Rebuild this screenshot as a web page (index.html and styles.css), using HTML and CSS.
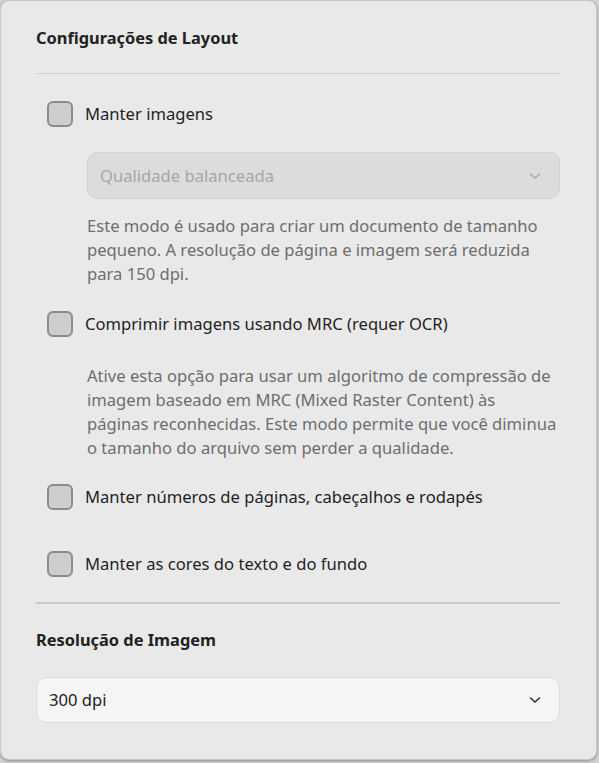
FILE: index.html
```html
<!DOCTYPE html>
<html lang="pt">
<head>
<meta charset="utf-8">
<title>Configurações de Layout</title>
<link rel="stylesheet" href="styles.css">
</head>
<body>
<div class="panel">
  <h2 class="section-title first">Configurações de Layout</h2>
  <div class="divider thin"></div>

  <label class="option opt-1">
    <span class="checkbox"></span>
    <span class="option-label">Manter imagens</span>
  </label>

  <div class="select disabled">
    <span class="select-value">Qualidade balanceada</span>
    <svg class="chevron" width="12" height="8" viewBox="0 0 12 8"><path d="M1.5 2 L6 6 L10.5 2" fill="none" stroke="currentColor" stroke-width="1.2" stroke-linecap="round" stroke-linejoin="round"/></svg>
  </div>

  <p class="desc desc-1">Este modo é usado para criar um documento de tamanho<br>pequeno. A resolução de página e imagem será reduzida<br>para 150 dpi.</p>

  <label class="option opt-2">
    <span class="checkbox"></span>
    <span class="option-label">Comprimir imagens usando MRC (requer OCR)</span>
  </label>

  <p class="desc desc-2">Ative esta opção para usar um algoritmo de compressão de<br>imagem baseado em MRC (Mixed Raster Content) às<br>páginas reconhecidas. Este modo permite que você diminua<br>o tamanho do arquivo sem perder a qualidade.</p>

  <label class="option opt-3">
    <span class="checkbox"></span>
    <span class="option-label">Manter números de páginas, cabeçalhos e rodapés</span>
  </label>

  <label class="option opt-4">
    <span class="checkbox"></span>
    <span class="option-label">Manter as cores do texto e do fundo</span>
  </label>

  <div class="divider thick"></div>

  <h2 class="section-title second">Resolução de Imagem</h2>

  <div class="select enabled">
    <span class="select-value">300 dpi</span>
    <svg class="chevron" width="12" height="8" viewBox="0 0 12 8"><path d="M1.5 2 L6 6 L10.5 2" fill="none" stroke="currentColor" stroke-width="1.4" stroke-linecap="round" stroke-linejoin="round"/></svg>
  </div>
</div>
</body>
</html>
```

FILE: styles.css
```css
html, body {
  margin: 0;
  padding: 0;
}
body {
  background: #d2d2d2;
  font-family: "Noto Sans", "Open Sans", sans-serif;
  color: #1f1f1f;
  width: 599px;
  height: 763px;
  overflow: hidden;
}
.panel {
  box-sizing: border-box;
  width: 597px;
  height: 760px;
  background: #e9e9e9;
  border: 1px solid #c9c9c9;
  border-radius: 9px;
  box-shadow: 0 1px 3px rgba(0,0,0,0.35);
  padding: 26px 36px 0 35px;
  display: flex;
  flex-direction: column;
}
.section-title {
  margin: 0;
  font-size: 16.4px;
  font-weight: 700;
  line-height: 22px;
  color: #222;
}
.section-title.second {
  margin-top: 25px;
}
.divider {
  background: #cfcfcf;
}
.divider.thin {
  height: 1px;
  margin-top: 24px;
}
.divider.thick {
  height: 2px;
  margin-top: 25px;
  background: #c9c9c9;
}
.option {
  display: flex;
  align-items: center;
  gap: 12px;
  padding-left: 11px;
  height: 26px;
}
.checkbox {
  box-sizing: border-box;
  width: 26px;
  height: 26px;
  border: 2px solid #8c8c8c;
  border-radius: 6px;
  background: #cdcdcd;
  flex: none;
}
.option-label {
  font-size: 16.6px;
  line-height: 22px;
  color: #1f1f1f;
  white-space: nowrap;
}
.opt-1 { margin-top: 27px; }
.opt-2 { margin-top: 25px; }
.opt-3 { margin-top: 24px; }
.opt-4 { margin-top: 41px; }

.select {
  box-sizing: border-box;
  display: flex;
  align-items: center;
  justify-content: space-between;
  border-radius: 10px;
  padding: 0 18px 0 12px;
}
.select.disabled {
  margin: 25px 0 0 51px;
  height: 47px;
  background: #dcdcdc;
  border: 1px solid #d2d2d2;
  color: #a6a6a6;
}
.select.enabled {
  margin-top: 26px;
  height: 46px;
  background: #f5f5f5;
  border: 1px solid #dcdcdc;
  color: #222;
}
.select-value {
  font-size: 16.6px;
  line-height: 22px;
}
.chevron {
  display: block;
}
.desc {
  margin: 0 0 0 51px;
  font-size: 16.6px;
  line-height: 24px;
  color: #6e6e6e;
  white-space: nowrap;
}
.desc-1 { margin-top: 15px; }
.desc-2 { margin-top: 27px; }
```
